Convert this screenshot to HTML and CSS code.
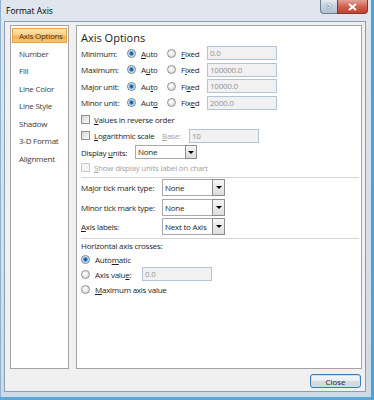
FILE: index.html
```html
<!DOCTYPE html>
<html lang="en">
<head>
    <meta charset="UTF-8">
    <meta name="viewport" content="width=device-width, initial-scale=1.0">
    <title>Format Axis</title>
    <link rel="stylesheet" href="styles.css">
</head>
<body>
    <div class="window">
        <div class="titlebar">
            <span class="title">Format Axis</span>
            <div class="caption-buttons">
                <span class="cap-btn help">?</span>
                <span class="cap-btn close">
                    <svg width="11" height="8" viewBox="0 0 11 8"><path d="M2 1 L9 7 M9 1 L2 7" stroke="#fff" stroke-width="2" fill="none"/></svg>
                </span>
            </div>
        </div>

        <div class="client">
            <div class="panes">
                <ul class="nav">
                    <li class="active">Axis Options</li>
                    <li>Number</li>
                    <li>Fill</li>
                    <li>Line Color</li>
                    <li>Line Style</li>
                    <li>Shadow</li>
                    <li>3-D Format</li>
                    <li>Alignment</li>
                </ul>

                <div class="panel">
                    <h2>Axis Options</h2>

                    <div class="row">
                        <span class="label">Minimum:</span>
                        <span class="opt"><span class="radio checked"></span><u>A</u>uto</span>
                        <span class="opt"><span class="radio"></span><u>F</u>ixed</span>
                        <span class="textbox">0.0</span>
                    </div>
                    <div class="row">
                        <span class="label">Maximum:</span>
                        <span class="opt"><span class="radio checked"></span>A<u>u</u>to</span>
                        <span class="opt"><span class="radio"></span>F<u>i</u>xed</span>
                        <span class="textbox">100000.0</span>
                    </div>
                    <div class="row">
                        <span class="label">Major unit:</span>
                        <span class="opt"><span class="radio checked"></span>Au<u>t</u>o</span>
                        <span class="opt"><span class="radio"></span>Fi<u>x</u>ed</span>
                        <span class="textbox">10000.0</span>
                    </div>
                    <div class="row">
                        <span class="label">Minor unit:</span>
                        <span class="opt"><span class="radio checked"></span>Aut<u>o</u></span>
                        <span class="opt"><span class="radio"></span>Fix<u>e</u>d</span>
                        <span class="textbox">2000.0</span>
                    </div>

                    <div class="row">
                        <span class="check"></span><u>V</u>alues in reverse order
                    </div>
                    <div class="row">
                        <span class="check"></span>
                        <span class="log-label"><u>L</u>ogarithmic scale</span>
                        <span class="base-label"><u>B</u>ase:</span>
                        <span class="textbox">10</span>
                    </div>
                    <div class="row">
                        <span class="units-label">Display <u>u</u>nits:</span>
                        <span class="select small">
                            <span class="value">None</span>
                            <span class="arrow"></span>
                        </span>
                    </div>
                    <div class="row short disabled">
                        <span class="check off"></span><u>S</u>how display units label on chart
                    </div>

                    <div class="sep"></div>

                    <div class="row tall">
                        <span class="tick-label">Major tick mark type:</span>
                        <span class="select">
                            <span class="value">None</span>
                            <span class="arrow"></span>
                        </span>
                    </div>
                    <div class="row tall">
                        <span class="tick-label">Minor tick mark type:</span>
                        <span class="select">
                            <span class="value">None</span>
                            <span class="arrow"></span>
                        </span>
                    </div>
                    <div class="row tall">
                        <span class="tick-label"><u>A</u>xis labels:</span>
                        <span class="select">
                            <span class="value">Next to Axis</span>
                            <span class="arrow"></span>
                        </span>
                    </div>

                    <div class="sep"></div>

                    <div class="row caption">Horizontal axis crosses:</div>
                    <div class="row cross">
                        <span class="radio checked"></span>Auto<u>m</u>atic
                    </div>
                    <div class="row cross">
                        <span class="radio"></span>
                        <span class="value-label">Axis valu<u>e</u>:</span>
                        <span class="textbox">0.0</span>
                    </div>
                    <div class="row cross">
                        <span class="radio"></span><u>M</u>aximum axis value
                    </div>
                </div>
            </div>

            <div class="footer">
                <button class="close-btn">Close</button>
            </div>
        </div>
    </div>
</body>
</html>
```

FILE: styles.css
```css
* {
    box-sizing: border-box;
}
body {
    margin: 0;
    font-family: "Open Sans", "Noto Sans", sans-serif;
    font-size: 8px;
    letter-spacing: -0.25px;
    color: #1e1e1e;
}
u {
    text-decoration-thickness: 1px;
}
.window {
    width: 374px;
    height: 400px;
    padding: 0 8px 8px 4px;
    display: flex;
    flex-direction: column;
    background: linear-gradient(#dfe6ee, #cddae7);
    box-shadow: inset -3px 0 0 #46a6dc, inset 0 -3px 0 #5aa9da, inset 1px 0 0 #8fb2d1;
}
.titlebar {
    height: 21px;
    display: flex;
    justify-content: space-between;
    align-items: flex-start;
    padding-left: 2px;
    margin-right: -2px;
}
.title {
    font-size: 8.5px;
    line-height: 22px;
    letter-spacing: 0;
    color: #000;
}
.caption-buttons {
    display: flex;
}
.cap-btn {
    height: 14px;
    display: flex;
    align-items: center;
    justify-content: center;
    border: 1px solid #6a7d93;
    border-top: none;
}
.help {
    width: 17px;
    border-right: none;
    border-radius: 0 0 0 4px;
    background: linear-gradient(#e3eaf1, #c3cfdc 50%, #b3c2d2);
    color: #fff;
    font-weight: bold;
    font-size: 9px;
    text-shadow: 0 0 1px #4d5d70, 0 0 1px #4d5d70;
}
.close {
    width: 31px;
    border-radius: 0 0 4px 0;
    border-color: #7b3a32;
    background: linear-gradient(#e3a196, #d1604f 50%, #c2412c);
}
.client {
    flex: 1;
    display: flex;
    flex-direction: column;
    background: #f0f0f0;
    border: 1px solid #8c9db0;
    padding: 3px 3px 3px 5px;
}
.panes {
    height: 344px;
    display: flex;
    gap: 7px;
}
.nav {
    width: 59px;
    margin: 0;
    padding: 2px 1px;
    list-style: none;
    background: #fff;
    border: 1px solid #a3a3a3;
}
.nav li {
    height: 15px;
    line-height: 15px;
    padding-left: 7px;
    margin-bottom: 2.5px;
    color: #3c3c3c;
    white-space: nowrap;
}
.nav li.active {
    padding-left: 6px;
    line-height: 13px;
    border: 1px solid #e3a44c;
    background: linear-gradient(#fee5b0, #fdd08a 45%, #fbae52 55%, #fcc670);
    color: #4a3a20;
}
.panel {
    flex: 1;
    background: #fff;
    border: 1px solid #a3a3a3;
    padding-left: 4px;
}
h2 {
    margin: 4px 0 0;
    font-size: 11px;
    font-weight: normal;
    line-height: 15px;
    letter-spacing: 0;
    color: #1a1a1a;
}
.row {
    display: flex;
    align-items: center;
    height: 16.5px;
    white-space: nowrap;
}
.row.short {
    height: 14px;
}
.row.tall {
    height: 17px;
    margin-bottom: 2.5px;
}
.row.caption {
    height: 12px;
}
.row.cross {
    height: 15px;
}
.disabled {
    color: #a3a3a3;
}
.label {
    width: 46px;
}
.opt {
    width: 40px;
    display: flex;
    align-items: center;
}
.radio {
    flex: none;
    width: 9px;
    height: 9px;
    margin-right: 5px;
    border-radius: 50%;
    border: 1px solid #8f8f8f;
    background: radial-gradient(circle at 40% 35%, #fff, #d2d2d2);
}
.radio.checked {
    border-color: #6f7f90;
    background: radial-gradient(circle, #0d4b85 0, #2e7ec0 1.6px, #b3d3ec 2.6px, #f4f8fb 3.6px);
}
.check {
    flex: none;
    width: 9px;
    height: 9px;
    margin-right: 4px;
    border: 1px solid #8f8f8f;
    background: linear-gradient(135deg, #d6d6d6, #fbfbfb);
}
.check.off {
    border-color: #c9c9c9;
    background: #f4f4f4;
}
.textbox {
    flex: none;
    width: 70px;
    height: 14px;
    padding-left: 2px;
    line-height: 12px;
    border: 1px solid #b4c4d6;
    background: #f1f1f1;
    color: #939393;
}
.log-label {
    width: 68px;
}
.base-label {
    width: 27px;
    color: #a3a3a3;
}
.units-label {
    width: 54px;
}
.tick-label {
    width: 81px;
}
.value-label {
    width: 47px;
}
.select {
    flex: none;
    width: 63px;
    height: 17px;
    display: flex;
    border: 1px solid #a9a9a9;
    background: #fff;
}
.select.small {
    width: 62px;
    height: 14px;
}
.select .value {
    flex: 1;
    padding-left: 2px;
    line-height: 15px;
    color: #1e1e1e;
}
.select.small .value {
    line-height: 12px;
}
.select .arrow {
    width: 13px;
    display: flex;
    align-items: center;
    justify-content: center;
    border: 1px solid #8d8d8d;
    margin: -1px -1px -1px 0;
    background: linear-gradient(#f6f6f6, #dcdcdc);
}
.select.small .arrow {
    width: 12px;
}
.select .arrow::after {
    content: "";
    border-left: 3px solid transparent;
    border-right: 3px solid transparent;
    border-top: 3px solid #000;
}
.sep {
    height: 0;
    border-top: 1px solid #d4d4d4;
    margin: 2.5px 2px 1px 0;
}
.footer {
    display: flex;
    justify-content: flex-end;
    margin-top: 5px;
}
.close-btn {
    width: 51px;
    height: 14px;
    margin-right: 1px;
    padding: 0;
    font-family: inherit;
    font-size: 8px;
    color: #1e1e1e;
    border: 1px solid #3c7bad;
    border-radius: 3px;
    background: linear-gradient(#f5f7f8, #e9ecee 50%, #d7dde1 50%, #cfd7dc);
    box-shadow: inset 0 0 0 1px #bfe4f6;
}
```
